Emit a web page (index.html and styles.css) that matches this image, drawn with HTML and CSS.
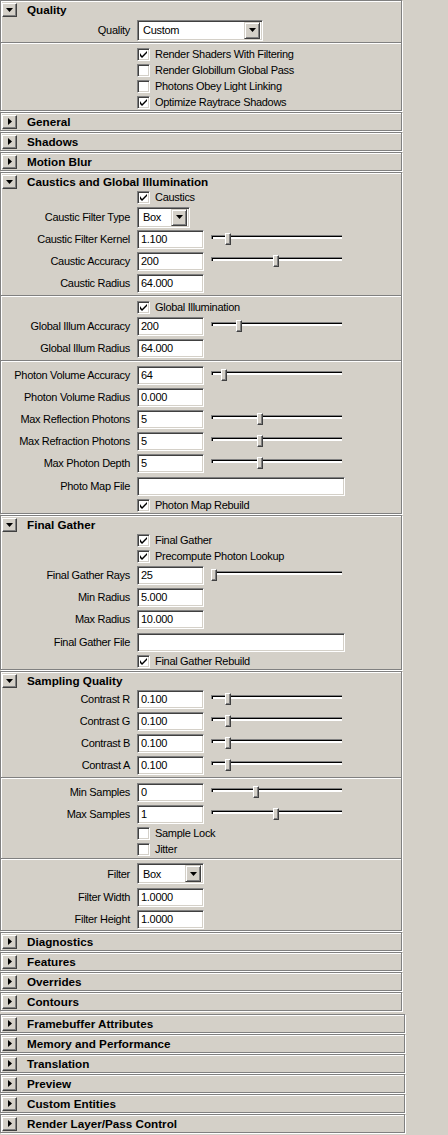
FILE: index.html
```html
<!DOCTYPE html>
<html>
<head>
<meta charset="utf-8">
<link rel="stylesheet" href="styles.css">
</head>
<body>
<div class="editor">
  <div class="upper">
    <section class="frame">
      <div class="hdr"><span class="tog"><svg width="7" height="4" viewBox="0 0 7 4"><path d="M0 0H7L3.5 4Z"/></svg></span><span class="title">Quality</span></div>
      <div class="grp q1">
        <div class="row"><span class="lbl">Quality</span><div class="dd w125"><span class="ddv">Custom</span><span class="ddb"><svg width="7" height="4" viewBox="0 0 7 4"><path d="M0 0H7L3.5 4Z"/></svg></span></div></div>
      </div>
      <div class="sep"></div>
      <div class="grp">
        <div class="crow"><span class="cb on"></span><span class="ct">Render Shaders With Filtering</span></div>
        <div class="crow"><span class="cb"></span><span class="ct">Render Globillum Global Pass</span></div>
        <div class="crow"><span class="cb"></span><span class="ct">Photons Obey Light Linking</span></div>
        <div class="crow"><span class="cb on"></span><span class="ct">Optimize Raytrace Shadows</span></div>
      </div>
    </section>
    <section class="frame"><div class="hdr"><span class="tog"><svg width="4" height="7" viewBox="0 0 4 7"><path d="M0 0V7L4 3.5Z"/></svg></span><span class="title">General</span></div></section>
    <section class="frame"><div class="hdr"><span class="tog"><svg width="4" height="7" viewBox="0 0 4 7"><path d="M0 0V7L4 3.5Z"/></svg></span><span class="title">Shadows</span></div></section>
    <section class="frame"><div class="hdr"><span class="tog"><svg width="4" height="7" viewBox="0 0 4 7"><path d="M0 0V7L4 3.5Z"/></svg></span><span class="title">Motion Blur</span></div></section>
    <section class="frame">
      <div class="hdr"><span class="tog"><svg width="7" height="4" viewBox="0 0 7 4"><path d="M0 0H7L3.5 4Z"/></svg></span><span class="title">Caustics and Global Illumination</span></div>
      <div class="grp">
        <div class="crow"><span class="cb on"></span><span class="ct">Caustics</span></div>
        <div class="row mt1"><span class="lbl">Caustic Filter Type</span><div class="dd w52"><span class="ddv">Box</span><span class="ddb"><svg width="7" height="4" viewBox="0 0 7 4"><path d="M0 0H7L3.5 4Z"/></svg></span></div></div>
        <div class="row"><span class="lbl">Caustic Filter Kernel</span><span class="fld">1.100</span><div class="sld"><span class="trk"></span><span class="thm" style="left:14px"></span></div></div>
        <div class="row"><span class="lbl">Caustic Accuracy</span><span class="fld">200</span><div class="sld"><span class="trk"></span><span class="thm" style="left:62px"></span></div></div>
        <div class="row"><span class="lbl">Caustic Radius</span><span class="fld">64.000</span></div>
      </div>
      <div class="sep"></div>
      <div class="grp">
        <div class="crow"><span class="cb on"></span><span class="ct">Global Illumination</span></div>
        <div class="row"><span class="lbl">Global Illum Accuracy</span><span class="fld">200</span><div class="sld"><span class="trk"></span><span class="thm" style="left:25px"></span></div></div>
        <div class="row"><span class="lbl">Global Illum Radius</span><span class="fld">64.000</span></div>
      </div>
      <div class="sep"></div>
      <div class="grp">
        <div class="row"><span class="lbl">Photon Volume Accuracy</span><span class="fld">64</span><div class="sld"><span class="trk"></span><span class="thm" style="left:10px"></span></div></div>
        <div class="row"><span class="lbl">Photon Volume Radius</span><span class="fld">0.000</span></div>
        <div class="row"><span class="lbl">Max Reflection Photons</span><span class="fld">5</span><div class="sld"><span class="trk"></span><span class="thm" style="left:46px"></span></div></div>
        <div class="row"><span class="lbl">Max Refraction Photons</span><span class="fld">5</span><div class="sld"><span class="trk"></span><span class="thm" style="left:46px"></span></div></div>
        <div class="row"><span class="lbl">Max Photon Depth</span><span class="fld">5</span><div class="sld"><span class="trk"></span><span class="thm" style="left:46px"></span></div></div>
        <div class="row mt1"><span class="lbl">Photo Map File</span><span class="fld file"></span></div>
        <div class="crow"><span class="cb on"></span><span class="ct">Photon Map Rebuild</span></div>
      </div>
    </section>
    <section class="frame">
      <div class="hdr"><span class="tog"><svg width="7" height="4" viewBox="0 0 7 4"><path d="M0 0H7L3.5 4Z"/></svg></span><span class="title">Final Gather</span></div>
      <div class="grp">
        <div class="crow"><span class="cb on"></span><span class="ct">Final Gather</span></div>
        <div class="crow"><span class="cb on"></span><span class="ct">Precompute Photon Lookup</span></div>
        <div class="row"><span class="lbl">Final Gather Rays</span><span class="fld">25</span><div class="sld"><span class="trk"></span><span class="thm" style="left:0px"></span></div></div>
        <div class="row"><span class="lbl">Min Radius</span><span class="fld">5.000</span></div>
        <div class="row"><span class="lbl">Max Radius</span><span class="fld">10.000</span></div>
        <div class="row mt1"><span class="lbl">Final Gather File</span><span class="fld file"></span></div>
        <div class="crow"><span class="cb on"></span><span class="ct">Final Gather Rebuild</span></div>
      </div>
    </section>
    <section class="frame">
      <div class="hdr"><span class="tog"><svg width="7" height="4" viewBox="0 0 7 4"><path d="M0 0H7L3.5 4Z"/></svg></span><span class="title">Sampling Quality</span></div>
      <div class="grp">
        <div class="row"><span class="lbl">Contrast R</span><span class="fld">0.100</span><div class="sld"><span class="trk"></span><span class="thm" style="left:14px"></span></div></div>
        <div class="row"><span class="lbl">Contrast G</span><span class="fld">0.100</span><div class="sld"><span class="trk"></span><span class="thm" style="left:14px"></span></div></div>
        <div class="row"><span class="lbl">Contrast B</span><span class="fld">0.100</span><div class="sld"><span class="trk"></span><span class="thm" style="left:14px"></span></div></div>
        <div class="row"><span class="lbl">Contrast A</span><span class="fld">0.100</span><div class="sld"><span class="trk"></span><span class="thm" style="left:14px"></span></div></div>
      </div>
      <div class="sep"></div>
      <div class="grp">
        <div class="row"><span class="lbl">Min Samples</span><span class="fld">0</span><div class="sld"><span class="trk"></span><span class="thm" style="left:42px"></span></div></div>
        <div class="row"><span class="lbl">Max Samples</span><span class="fld">1</span><div class="sld"><span class="trk"></span><span class="thm" style="left:62px"></span></div></div>
        <div class="crow"><span class="cb"></span><span class="ct">Sample Lock</span></div>
        <div class="crow"><span class="cb"></span><span class="ct">Jitter</span></div>
      </div>
      <div class="sep"></div>
      <div class="grp">
        <div class="row tall"><span class="lbl">Filter</span><div class="dd w66"><span class="ddv">Box</span><span class="ddb"><svg width="7" height="4" viewBox="0 0 7 4"><path d="M0 0H7L3.5 4Z"/></svg></span></div></div>
        <div class="row"><span class="lbl">Filter Width</span><span class="fld">1.0000</span></div>
        <div class="row"><span class="lbl">Filter Height</span><span class="fld">1.0000</span></div>
      </div>
    </section>
    <section class="frame"><div class="hdr"><span class="tog"><svg width="4" height="7" viewBox="0 0 4 7"><path d="M0 0V7L4 3.5Z"/></svg></span><span class="title">Diagnostics</span></div></section>
    <section class="frame"><div class="hdr"><span class="tog"><svg width="4" height="7" viewBox="0 0 4 7"><path d="M0 0V7L4 3.5Z"/></svg></span><span class="title">Features</span></div></section>
    <section class="frame"><div class="hdr"><span class="tog"><svg width="4" height="7" viewBox="0 0 4 7"><path d="M0 0V7L4 3.5Z"/></svg></span><span class="title">Overrides</span></div></section>
    <section class="frame"><div class="hdr"><span class="tog"><svg width="4" height="7" viewBox="0 0 4 7"><path d="M0 0V7L4 3.5Z"/></svg></span><span class="title">Contours</span></div></section>
  </div>
  <div class="lower">
    <section class="frame"><div class="hdr"><span class="tog"><svg width="4" height="7" viewBox="0 0 4 7"><path d="M0 0V7L4 3.5Z"/></svg></span><span class="title">Framebuffer Attributes</span></div></section>
    <section class="frame"><div class="hdr"><span class="tog"><svg width="4" height="7" viewBox="0 0 4 7"><path d="M0 0V7L4 3.5Z"/></svg></span><span class="title">Memory and Performance</span></div></section>
    <section class="frame"><div class="hdr"><span class="tog"><svg width="4" height="7" viewBox="0 0 4 7"><path d="M0 0V7L4 3.5Z"/></svg></span><span class="title">Translation</span></div></section>
    <section class="frame"><div class="hdr"><span class="tog"><svg width="4" height="7" viewBox="0 0 4 7"><path d="M0 0V7L4 3.5Z"/></svg></span><span class="title">Preview</span></div></section>
    <section class="frame"><div class="hdr"><span class="tog"><svg width="4" height="7" viewBox="0 0 4 7"><path d="M0 0V7L4 3.5Z"/></svg></span><span class="title">Custom Entities</span></div></section>
    <section class="frame"><div class="hdr"><span class="tog"><svg width="4" height="7" viewBox="0 0 4 7"><path d="M0 0V7L4 3.5Z"/></svg></span><span class="title">Render Layer/Pass Control</span></div></section>
  </div>
</div>
</body>
</html>
```
FILE: styles.css
```css
html, body {
  margin: 0;
  padding: 0;
  background: #d4d0c8;
}
body {
  font-family: "Liberation Sans", Arial, sans-serif;
  font-size: 11px;
  letter-spacing: -0.3px;
  color: #000;
}
.editor {
  width: 448px;
}
.upper {
  width: 402px;
}
.lower {
  width: 405px;
  margin-top: 3px;
}
.frame {
  border: 1px solid #808080;
  box-shadow: inset 1px 1px 0 #fff, 1px 1px 0 #fff;
  margin-bottom: 1px;
}
.hdr {
  height: 17px;
  display: flex;
  align-items: center;
}
.tog {
  box-sizing: border-box;
  width: 15px;
  height: 14px;
  margin-left: 1px;
  background: #d4d0c8;
  border-top: 1px solid #fff;
  border-left: 1px solid #fff;
  border-right: 1px solid #404040;
  border-bottom: 1px solid #404040;
  box-shadow: inset -1px -1px 0 #808080;
  display: flex;
  align-items: center;
  justify-content: center;
}
.tog svg {
  fill: #000;
  display: block;
}
.title {
  font-weight: bold;
  margin-left: 10px;
  font-size: 11.7px;
  letter-spacing: 0;
}
.grp {
  padding: 2px 0 1px;
}
.hdr + .grp {
  padding-top: 0;
  margin-top: -1px;
}
.hdr + .grp.q1 {
  padding-top: 1px;
  margin-top: 0;
}
.grp:last-child {
  padding-bottom: 0;
}
.sep {
  height: 1px;
  border-top: 1px solid #808080;
  background: #fff;
}
.row {
  height: 22px;
  display: flex;
  align-items: center;
}
.row.mt1 {
  margin-top: 1px;
}
.row.tall {
  height: 23px;
  margin-bottom: 1px;
}
.lbl {
  width: 129px;
  text-align: right;
  margin-right: 7px;
  white-space: nowrap;
}
.fld {
  box-sizing: border-box;
  width: 67px;
  height: 19px;
  background: #fff;
  border-top: 1px solid #808080;
  border-left: 1px solid #808080;
  border-right: 1px solid #fff;
  border-bottom: 1px solid #fff;
  box-shadow: inset 1px 1px 0 #404040, inset -1px -1px 0 #d4d0c8;
  padding-left: 3px;
  line-height: 17px;
}
.fld.file {
  width: 208px;
}
.sld {
  position: relative;
  width: 131px;
  height: 18px;
  margin-left: 7px;
}
.trk {
  position: absolute;
  left: 0;
  right: 0;
  top: 5px;
  height: 4px;
  box-sizing: border-box;
  border-top: 1px solid #808080;
  border-left: 1px solid #808080;
  background: #fff;
  box-shadow: inset 1px 1px 0 #000;
}
.thm {
  position: absolute;
  top: 3px;
  width: 6px;
  height: 12px;
  box-sizing: border-box;
  background: #d4d0c8;
  border-top: 1px solid #fff;
  border-left: 1px solid #fff;
  border-right: 1px solid #404040;
  border-bottom: 1px solid #404040;
  box-shadow: inset -1px -1px 0 #808080;
}
.crow {
  height: 16px;
  display: flex;
  align-items: center;
  padding-left: 136px;
}
.cb {
  box-sizing: border-box;
  width: 13px;
  height: 13px;
  background: #fff;
  border-top: 1px solid #808080;
  border-left: 1px solid #808080;
  border-right: 1px solid #fff;
  border-bottom: 1px solid #fff;
  box-shadow: inset 1px 1px 0 #404040, inset -1px -1px 0 #d4d0c8;
  position: relative;
}
.cb.on::after {
  content: "";
  position: absolute;
  left: 2px;
  top: 2px;
  width: 7px;
  height: 7px;
  background: no-repeat center / 7px 7px url("data:image/svg+xml,%3Csvg xmlns='http://www.w3.org/2000/svg' width='7' height='7'%3E%3Cpath d='M0 2v3l2 2 5-5V-0L2 5z' fill='%23000'/%3E%3C/svg%3E");
}
.ct {
  margin-left: 5px;
  white-space: nowrap;
}
.dd {
  box-sizing: border-box;
  height: 21px;
  background: #fff;
  border-top: 1px solid #808080;
  border-left: 1px solid #808080;
  border-right: 1px solid #fff;
  border-bottom: 1px solid #fff;
  box-shadow: inset 1px 1px 0 #404040, inset -1px -1px 0 #d4d0c8;
  display: flex;
  align-items: center;
  padding: 2px;
}
.w125 { width: 126px; }
.w52 { width: 53px; }
.w66 { width: 67px; }
.ddv {
  flex: 1;
  padding-left: 3px;
}
.ddb {
  box-sizing: border-box;
  width: 16px;
  height: 17px;
  background: #d4d0c8;
  border-top: 1px solid #d4d0c8;
  border-left: 1px solid #d4d0c8;
  border-right: 1px solid #404040;
  border-bottom: 1px solid #404040;
  box-shadow: inset 1px 1px 0 #fff, inset -1px -1px 0 #808080;
  display: flex;
  align-items: center;
  justify-content: center;
}
.ddb svg {
  fill: #000;
  display: block;
}
```
